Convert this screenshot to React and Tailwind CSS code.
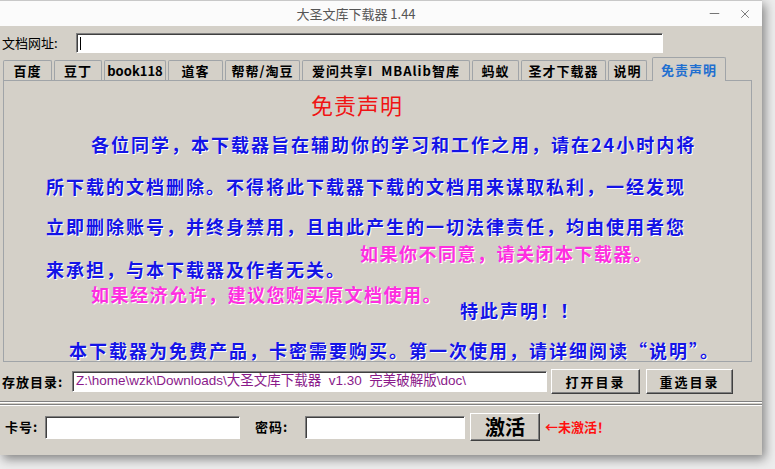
import React from "react";
import { Minus, X } from "lucide-react";

const cjk = { fontFamily: '"Noto Sans CJK SC", "Liberation Sans", sans-serif' };

// windows classic raised / sunken edges
const raised =
  "bg-[#d4d0c8] border border-t-white border-l-white border-r-[#404040] border-b-[#404040] shadow-[inset_-1px_-1px_0_#808080]";
const sunken =
  "bg-white border border-t-[#808080] border-l-[#808080] border-r-white border-b-white shadow-[inset_1px_1px_0_#404040]";

const tabs = [
  { name: "百度", w: "w-[49px]" },
  { name: "豆丁", w: "w-[48px]" },
  { name: "book118", w: "w-[62px]", latin: true },
  { name: "道客", w: "w-[55px]" },
  { name: "帮帮/淘豆", w: "w-[75px]" },
  { name: "爱问共享I  MBAlib智库", w: "w-[168px]" },
  { name: "蚂蚁", w: "w-[47px]" },
  { name: "圣才下载器", w: "w-[85px]" },
  { name: "说明", w: "w-[39px]" },
];

const blue = "text-[#1414e6] font-bold text-[18px] leading-[20px] h-[20px] tracking-[2px] whitespace-nowrap [text-shadow:1px_1px_0_#ffffff]";
const pink = "text-[#ff2ee0] font-bold text-[18px] leading-[20px] h-[20px] tracking-[1.5px] whitespace-nowrap [text-shadow:1px_1px_0_#ffffff]";

export default function App() {
  return (
    <div className="w-[775px] h-[469px] bg-[#ededed] overflow-hidden" style={cjk}>
      <div className="w-[762px] h-[455px] bg-[#d4d0c8] flex flex-col shadow-[3px_4px_10px_rgba(0,0,0,0.45)]">
        {/* title bar */}
        <div className="h-[26px] bg-[#fbfbfb] border-t border-[#c8c8c8] flex items-center relative shrink-0">
          <div className="flex-1 text-center text-[13px] text-[#555]">
            <span className="ml-[-50px]">大圣文库下载器 1.44</span>
          </div>
          <div className="absolute right-[10px] top-[5px] flex items-center gap-[16px] text-[#555]">
            <Minus size={15} strokeWidth={1.3} />
            <X size={14} strokeWidth={1.3} />
          </div>
        </div>

        {/* url row */}
        <div className="flex items-center mt-[7px] h-[20px] shrink-0">
          <span className="ml-[2px] text-[13px] text-black w-[74px]">文档网址:</span>
          <div className={`${sunken} w-[587px] h-[20px] flex items-center pl-[3px]`}>
            <div className="w-px h-[13px] bg-black" />
          </div>
        </div>

        {/* tabs */}
        <div className="flex items-end mt-[4px] h-[23px] pl-[3px] shrink-0">
          {tabs.map((t, i) => (
            <div
              key={i}
              className={`${t.w} h-[20px] mr-[2px] border border-b-0 border-[#a0a4a8] rounded-t-[2px] bg-[#d4d0c8] flex items-center justify-center text-[13px] font-bold ${t.latin ? "tracking-normal" : "tracking-[1px]"} text-black whitespace-pre`}
            >
              {t.name}
            </div>
          ))}
          <div className="w-[74px] h-[24px] ml-[3px] border border-b-0 border-[#a0a4a8] rounded-t-[2px] bg-[#d4d0c8] flex items-center justify-center text-[13px] font-bold tracking-[1px] text-[#1f6fd0] relative top-[1px] z-10">
            免责声明
          </div>
        </div>

        {/* panel */}
        <div className="ml-[3px] w-[749px] h-[282px] border border-[#a0a4a8] overflow-hidden shrink-0">
          <div className="ml-[307px] mt-[11px] text-[22px] leading-[24px] h-[24px] text-[#f01414] tracking-[1px]">免责声明</div>
          <div className={`${blue} ml-[87px] mt-[18px]`}>各位同学，本下载器旨在辅助你的学习和工作之用，请在24小时内将</div>
          <div className={`${blue} ml-[42px] mt-[22px]`}>所下载的文档删除。不得将此下载器下载的文档用来谋取私利，一经发现</div>
          <div className={`${blue} ml-[42px] mt-[20px]`}>立即删除账号，并终身禁用，且由此产生的一切法律责任，均由使用者您</div>
          <div className="flex items-start mt-[7px]">
            <div className={`${blue} ml-[42px] mt-[16px] tracking-[1.5px]`}>来承担，与本下载器及作者无关。</div>
            <div className={`${pink} ml-[14px]`}>如果你不同意，请关闭本下载器。</div>
          </div>
          <div className="flex items-start mt-[5px]">
            <div className={`${pink} ml-[87px]`}>如果经济允许，建议您购买原文档使用。</div>
            <div className={`${blue} ml-[18px] mt-[16px]`}>特此声明！！</div>
          </div>
          <div className={`${blue} ml-[65px] mt-[20px]`}>本下载器为免费产品，卡密需要购买。第一次使用，请详细阅读“说明”。</div>
        </div>

        {/* save dir row */}
        <div className="flex items-center mt-[7px] h-[25px] shrink-0">
          <span className="ml-[2px] w-[70px] text-[13px] font-bold tracking-[1px] text-black whitespace-nowrap">存放目录:</span>
          <div
            className={`${sunken} w-[475px] h-[21px] flex items-center pl-[3px] text-[13.5px] text-[#8a1a8a] whitespace-pre overflow-hidden`}
            style={{ fontFamily: '"Liberation Sans", "Noto Sans CJK SC", sans-serif' }}
          >
            {"Z:\\home\\wzk\\Downloads\\大圣文库下载器  v1.30  完美破解版\\doc\\"}
          </div>
          <button className={`${raised} ml-[4px] w-[89px] h-[25px] text-[13px] font-bold tracking-[2px] text-black`}>打开目录</button>
          <button className={`${raised} ml-[6px] w-[87px] h-[25px] text-[13px] font-bold tracking-[2px] text-black`}>重选目录</button>
        </div>

        {/* separator */}
        <div className="mt-[7px] shrink-0">
          <div className="h-[2px] border-t border-[#808080] border-b border-b-white" />
          <div className="h-[2px] mt-[1px] border-t border-[#808080] border-b border-b-white" />
        </div>

        {/* activation row */}
        <div className="flex items-center mt-[7px] h-[28px] shrink-0">
          <span className="ml-[5px] w-[40px] text-[13px] font-bold tracking-[1px] text-black">卡号:</span>
          <div className={`${sunken} w-[195px] h-[23px]`} />
          <span className="ml-[15px] w-[50px] text-[13px] font-bold tracking-[1px] text-black">密码:</span>
          <div className={`${sunken} w-[160px] h-[23px]`} />
          <button className={`${raised} ml-[5px] w-[70px] h-[28px] text-[20px] font-bold text-black leading-none`}>激活</button>
          <span className="ml-[5px] text-[13px] font-bold text-[#ff1010] whitespace-nowrap">←未激活！</span>
        </div>
      </div>
    </div>
  );
}
